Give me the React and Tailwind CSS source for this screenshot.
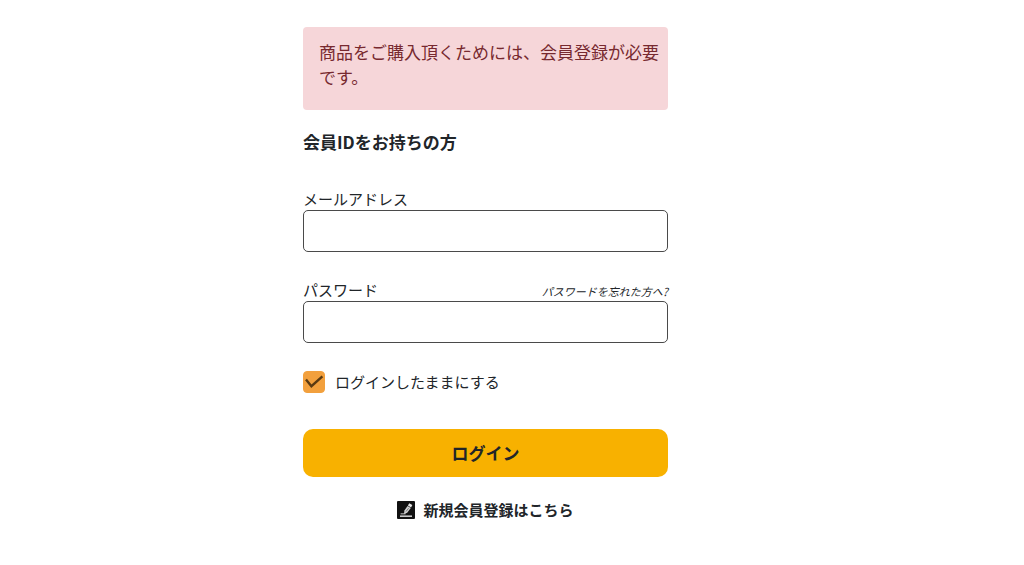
import { useState } from 'react';

const labelClass = "block pb-[2px] text-[15px] leading-[18px]";
const inputClass =
    "block w-full h-[42px] px-3 text-[15px] bg-white border border-[#4a4a4a] rounded-[5px] outline-none focus:border-[#f8b100]";

function RegisterIcon() {
    return (
        <svg viewBox="0 0 18 18" className="w-[18px] h-[18px] shrink-0" aria-hidden="true">
            <rect width="18" height="18" rx="1" fill="#111111" />
            <path d="M3 15.2h12" stroke="#c8c8c8" strokeWidth="1.6" />
            <path d="M3.6 12.8h5" stroke="#a8a8a8" strokeWidth="1.2" />
            <path d="M12.3 2.2l3 1.9-1.2 2.4-3.2-2z" fill="#e6e6e6" />
            <path d="M10.6 4.9l3.2 2.1-3.6 4.7-3.2 1.2.4-3.5z" fill="#cfcfcf" />
            <path d="M11.6 7.2L9 10.5" stroke="#555555" strokeWidth="0.7" />
        </svg>
    );
}

export default function App() {
    const [email, setEmail] = useState('');
    const [password, setPassword] = useState('');
    const [remember, setRemember] = useState(true);

    return (
        <main className="min-h-screen bg-white pt-[27px] pb-10 pl-4 pr-4 lg:pl-0 lg:pr-[53px] font-['Noto_Sans_CJK_JP','Noto_Sans',sans-serif] text-[#212529]">
            <div className="w-full max-w-[365px] mx-auto">
                <div role="alert" className="pt-3 pb-[21px] pl-4 pr-2 bg-[#f6d6d9] rounded text-[17px] leading-[25px] text-[#77292f]">
                    商品をご購入頂くためには、会員登録が必要です。
                </div>

                <h1 className="mt-[19px] text-[17px] leading-[25px] font-bold">会員IDをお持ちの方</h1>

                <form className="mt-9" onSubmit={(e) => e.preventDefault()}>
                    <label htmlFor="email" className={labelClass}>メールアドレス</label>
                    <input
                        id="email"
                        type="email"
                        value={email}
                        onChange={(e) => setEmail(e.target.value)}
                        className={inputClass}
                    />

                    <div className="mt-[29px] flex items-end justify-between">
                        <label htmlFor="password" className={labelClass}>パスワード</label>
                        <a href="#forgot" className="text-[11px] leading-5 italic">パスワードを忘れた方へ?</a>
                    </div>
                    <input
                        id="password"
                        type="password"
                        value={password}
                        onChange={(e) => setPassword(e.target.value)}
                        className={inputClass}
                    />

                    <div className="mt-7 flex items-center gap-[10px]">
                        <span className="grid w-[22px] h-[22px]">
                            <input
                                id="remember"
                                type="checkbox"
                                checked={remember}
                                onChange={(e) => setRemember(e.target.checked)}
                                className="peer col-start-1 row-start-1 appearance-none w-[22px] h-[22px] rounded border border-[#f2a03d] bg-white checked:bg-[#f2a03d]"
                            />
                            <svg viewBox="0 0 22 22" fill="none" className="col-start-1 row-start-1 w-[22px] h-[22px] pointer-events-none invisible peer-checked:visible" aria-hidden="true">
                                <path d="M3 8.4l5.4 6.8L19.4 5.4" stroke="#5a3a12" strokeWidth="2.4" />
                            </svg>
                        </span>
                        <label htmlFor="remember" className="text-[15px] leading-5">ログインしたままにする</label>
                    </div>

                    <button type="submit" className="mt-9 w-full h-12 rounded-[10px] bg-[#f8b100] text-[17px] font-bold cursor-pointer">
                        ログイン
                    </button>
                </form>

                <a href="#register" className="mt-[23px] flex items-center justify-center gap-2 text-[15px] leading-5 font-bold">
                    <RegisterIcon />
                    <span>新規会員登録はこちら</span>
                </a>
            </div>
        </main>
    );
}
